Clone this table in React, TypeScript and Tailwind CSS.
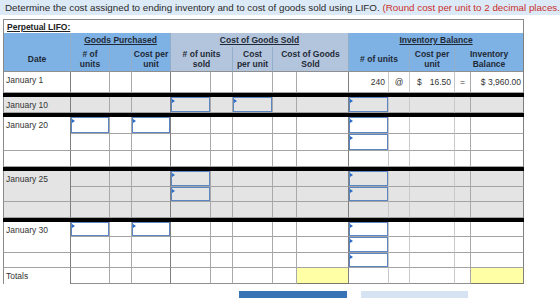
import React from "react";

const RB = [
  "border-r border-r-[#7f7f7f]",
  "border-r border-r-[#a9a9a9]",
  "border-r border-r-[#a9a9a9]",
  "border-r border-r-[#7f7f7f]",
  "border-r border-r-[#a9a9a9]",
  "border-r border-r-[#a9a9a9]",
  "border-r border-r-[#a9a9a9]",
  "border-r border-r-[#a9a9a9]",
  "border-r border-r-[#7f7f7f]",
  "border-r border-r-[#c9c9c9]",
  "border-r border-r-[#c9c9c9]",
  "border-r border-r-[#c9c9c9]",
  "border-r border-r-[#a9a9a9]",
  "border-r border-r-[#7f7f7f]",
];

const COLS = [
  "w-[68px]",
  "w-[39px]",
  "w-[22px]",
  "w-[39px]",
  "w-[40px]",
  "w-[22px]",
  "w-[40px]",
  "w-[24px]",
  "w-[52px]",
  "w-[40px]",
  "w-[21px]",
  "w-[45px]",
  "w-[16px]",
  "w-[53px]",
];

function InputBox() {
  return (
    <div className="absolute inset-0 border border-[#5a87c4]">
      <span className="absolute left-0 top-[1px] h-0 w-0 border-y-[2px] border-y-transparent border-l-[3px] border-l-[#2a6bc9]" />
    </div>
  );
}

type DateCell = { text: string; span: number } | null;

function Row({
  h,
  gray,
  date,
  inputs = [],
  content = {},
}: {
  h: string;
  gray?: boolean;
  date: DateCell;
  inputs?: number[];
  content?: Record<number, React.ReactNode>;
}) {
  const bg = gray ? "bg-[#e4e4e4]" : "bg-white";
  const cells = [];
  for (let i = 1; i < 14; i++) {
    cells.push(
      <td
        key={i}
        className={`relative p-0 border-b border-b-[#a3a3a3] ${RB[i]} ${bg}`}
      >
        {inputs.includes(i) ? <InputBox /> : content[i]}
      </td>
    );
  }
  return (
    <tr className={h}>
      {date && (
        <td
          rowSpan={date.span}
          className={`align-top pl-[2px] pt-[3px] leading-[10px] border-l border-l-[#8a8a8a] border-b border-b-[#a3a3a3] ${RB[0]} ${bg}`}
        >
          {date.text}
        </td>
      )}
      {cells}
    </tr>
  );
}

function Bar() {
  return (
    <tr className="h-[4px]">
      <td colSpan={14} className="h-[4px] bg-black p-0 text-[0px] leading-[0px]" />
    </tr>
  );
}

const HB = "border-r border-r-[#94adc8]";

export default function App() {
  return (
    <div className="h-[298px] w-[560px] overflow-hidden bg-white font-['Liberation_Sans',Arial,sans-serif] text-[#333]">
      <div className="h-[15px] w-full bg-[#dce9f6] pl-[5px] text-[9.8px] leading-[15px] whitespace-nowrap overflow-hidden text-[#2a2a2a]">
        Determine the cost assigned to ending inventory and to cost of goods sold using LIFO.{" "}
        <span className="text-[#c9302c]">(Round cost per unit to 2 decimal places.)</span>
      </div>

      <table className="ml-[3px] mt-[4px] w-[521px] table-fixed border-separate border-spacing-0 text-[8.5px]">
        <colgroup>
          {COLS.map((c, i) => (
            <col key={i} className={c} />
          ))}
        </colgroup>
        <tbody>
          <tr className="h-[14px]">
            <td
              colSpan={14}
              className="border-t border-l border-r border-[#8a8a8a] bg-white pl-[3px] pt-[1px] align-middle font-bold text-[8.5px] leading-[10px] text-[#222]"
            >
              <span className="underline">Perpetual LIFO:</span>
            </td>
          </tr>
          <tr className="h-[14px] font-bold text-[#1f2a36] leading-[10px]">
            <td className={`bg-[#7eb1e4] border-l border-l-[#8a8a8a] ${HB}`} />
            <td colSpan={3} className={`bg-[#7eb1e4] text-center ${HB}`}>
              <span className="underline">Goods Purchased</span>
            </td>
            <td colSpan={5} className={`bg-[#b3c5dd] text-center ${HB}`}>
              <span className="underline">Cost of Goods Sold</span>
            </td>
            <td colSpan={5} className="bg-[#7eb1e4] text-center border-r border-r-[#7f7f7f]">
              <span className="underline">Inventory Balance</span>
            </td>
          </tr>
          <tr className="h-[25px] font-bold text-[#1f2a36] leading-[10px] text-center">
            <td className={`bg-[#7eb1e4] border-l border-l-[#8a8a8a] border-b border-b-[#8f8f8f] ${HB}`}>Date</td>
            <td className={`bg-[#7eb1e4] border-b border-b-[#8f8f8f] ${HB}`}>
              # of
              <br />
              units
            </td>
            <td className={`bg-[#7eb1e4] border-b border-b-[#8f8f8f] ${HB}`} />
            <td className={`bg-[#7eb1e4] border-b border-b-[#8f8f8f] ${HB}`}>
              Cost per
              <br />
              unit
            </td>
            <td colSpan={2} className={`bg-[#b3c5dd] border-b border-b-[#8f8f8f] ${HB}`}>
              # of units
              <br />
              sold
            </td>
            <td className={`bg-[#b3c5dd] border-b border-b-[#8f8f8f] ${HB}`}>
              Cost
              <br />
              per unit
            </td>
            <td colSpan={2} className={`bg-[#b3c5dd] border-b border-b-[#8f8f8f] ${HB}`}>
              Cost of Goods
              <br />
              Sold
            </td>
            <td colSpan={2} className={`bg-[#7eb1e4] border-b border-b-[#8f8f8f] ${HB}`}>
              # of units
            </td>
            <td className={`bg-[#7eb1e4] border-b border-b-[#8f8f8f] ${HB}`}>
              Cost per
              <br />
              unit
            </td>
            <td colSpan={2} className="bg-[#7eb1e4] border-b border-b-[#8f8f8f] border-r border-r-[#7f7f7f]">
              Inventory
              <br />
              Balance
            </td>
          </tr>

          <Row
            h="h-[21px]"
            date={{ text: "January 1", span: 1 }}
            content={{
              9: <div className="text-right pr-[3px]">240</div>,
              10: <div className="text-center">@</div>,
              11: (
                <div className="flex justify-between pl-[7px] pr-[3px]">
                  <span>$</span>
                  <span>16.50</span>
                </div>
              ),
              12: <div className="text-center">=</div>,
              13: <div className="text-right pr-[2px] whitespace-nowrap">$ 3,960.00</div>,
            }}
          />
          <Bar />
          <Row h="h-[16px]" gray date={{ text: "January 10", span: 1 }} inputs={[4, 6, 9]} />
          <Bar />
          <Row h="h-[17px]" date={{ text: "January 20", span: 2 }} inputs={[1, 3, 9]} />
          <Row h="h-[17px]" date={null} inputs={[9]} />
          <Row h="h-[16px]" date={{ text: "", span: 1 }} />
          <Bar />
          <Row h="h-[16px]" gray date={{ text: "January 25", span: 2 }} inputs={[4, 9]} />
          <Row h="h-[15px]" gray date={null} inputs={[4, 9]} />
          <Row h="h-[16px]" gray date={{ text: "", span: 1 }} />
          <Bar />
          <Row h="h-[15px]" date={{ text: "January 30", span: 2 }} inputs={[1, 3, 9]} />
          <Row h="h-[16px]" date={null} inputs={[9]} />
          <Row h="h-[15px]" date={{ text: "", span: 1 }} inputs={[9]} />
          <tr className="h-[16px]">
            <td className={`align-middle pl-[2px] border-l border-l-[#8a8a8a] ${RB[0]} bg-white`}>Totals</td>
            {Array.from({ length: 13 }, (_, k) => {
              const i = k + 1;
              const yellow = i === 8 || i === 13;
              return (
                <td
                  key={i}
                  className={`p-0 border-b ${RB[i]} ${yellow ? "bg-[#ffffa6] border-b-[#7a7a6a]" : "bg-white border-b-[#8f8f8f]"}`}
                />
              );
            })}
          </tr>
        </tbody>
      </table>

      <div className="mt-[7px] flex gap-[14px] pl-[239px]">
        <div className="h-[24px] w-[108px] bg-[#3873b5]" />
        <div className="h-[24px] w-[107px] bg-[#d5e3f2]" />
      </div>
    </div>
  );
}
